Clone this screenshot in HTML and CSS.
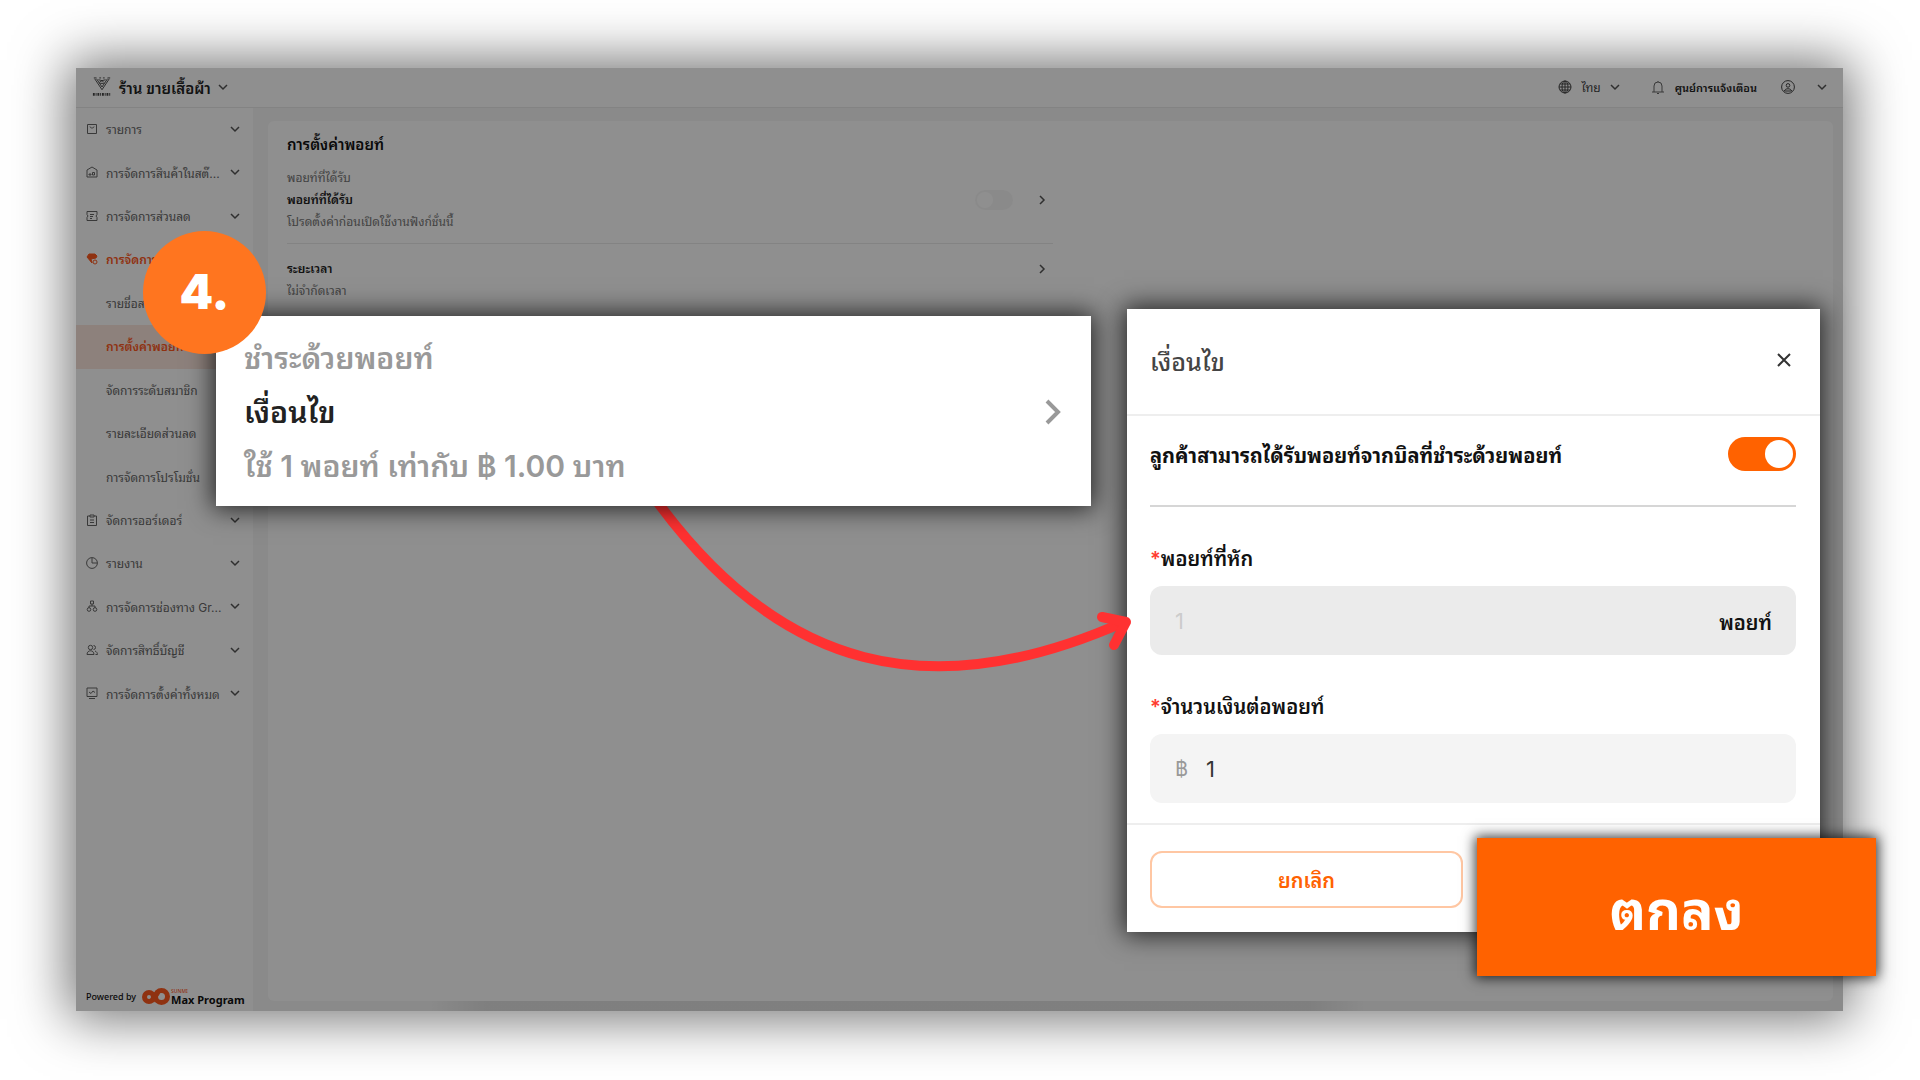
FILE: index.html
```html
<!DOCTYPE html>
<html lang="th">
<head>
    <meta charset="UTF-8">
    <meta name="viewport" content="width=device-width, initial-scale=1.0">
    <title>การตั้งค่าพอยท์</title>
    <link rel="stylesheet" href="styles.css">
</head>
<body>
    <!-- shared icons -->
    <svg class="sprite" aria-hidden="true">
        <symbol id="down" viewBox="0 0 10 10"><path d="M1 3l4 4 4-4"/></symbol>
        <symbol id="right" viewBox="0 0 10 10"><path d="M3 1l4 4-4 4"/></symbol>
    </svg>

    <div class="stage">
        <header class="topbar">
            <button class="shop">
                <svg class="shop-logo" viewBox="0 0 22 24">
                    <path d="M2 2h3M17 2h3M3 3l8 12 8-12M5 3l6 9 6-9M7 4l4 1 4-1M8 7l3-2 2 2M9 8h4M8 2h2M12 2h2"/>
                    <path d="M1 20h20" stroke-width="3" stroke-dasharray="2 1 1 1"/>
                </svg>
                <span>ร้าน ขายเสื้อผ้า</span>
                <svg class="chevron"><use href="#down"/></svg>
            </button>
            <div class="tools">
                <button class="lang">
                    <svg class="tool-icon" viewBox="0 0 14 14"><circle cx="7" cy="7" r="6"/><ellipse cx="7" cy="7" rx="3" ry="6"/><path d="M7 1v12M1 7h12M2 4h10M2 10h10"/></svg>
                    <span>ไทย</span>
                    <svg class="chevron"><use href="#down"/></svg>
                </button>
                <button class="notify">
                    <svg class="tool-icon" viewBox="0 0 14 14"><path d="M1 12h12M3 12V6a4 4 0 0 1 8 0v6M7 1v1M6 13.5h2"/></svg>
                    <span>ศูนย์การแจ้งเตือน</span>
                </button>
                <button class="account" aria-label="บัญชี">
                    <svg class="tool-icon" viewBox="0 0 14 14"><circle cx="7" cy="7" r="6.4"/><circle cx="7" cy="5.4" r="1.8"/><path d="M3.4 11c.6-3 6.6-3 7.2 0z"/></svg>
                    <svg class="chevron"><use href="#down"/></svg>
                </button>
            </div>
        </header>

        <div class="layout">
            <aside class="sidebar">
                <nav class="menu">
                    <a href="#"><svg class="icon" viewBox="0 0 12 12"><path d="M1.5 1.5h9v9h-9zM4 3.5c0 2 4 2 4 0"/></svg><span>รายการ</span><svg class="chevron"><use href="#down"/></svg></a>
                    <a href="#"><svg class="icon" viewBox="0 0 12 12"><path d="M1 4l5-3 5 3v7H1zM3 8h2v1H3zM6.5 6.5h2V9h-2z"/></svg><span>การจัดการสินค้าในสต๊...</span><svg class="chevron"><use href="#down"/></svg></a>
                    <a href="#"><svg class="icon" viewBox="0 0 12 12"><path d="M1 1.5h10v3L10 6l1 1.5v3H1v-3L2 6 1 4.5zM4 4.5h4M4 6.5h3M4 8.5h2"/></svg><span>การจัดการส่วนลด</span><svg class="chevron"><use href="#down"/></svg></a>
                    <a href="#" class="open"><svg class="icon" viewBox="0 0 12 12"><path class="fill" d="M3 1h6l2 2-1 2-5 1 1 4L1 4z"/><circle cx="9" cy="9" r="2"/></svg><span>การจัดการสมาชิก</span></a>
                    <a href="#" class="sub"><span>รายชื่อสมาชิก</span></a>
                    <a href="#" class="sub active"><span>การตั้งค่าพอยท์</span></a>
                    <a href="#" class="sub"><span>จัดการระดับสมาชิก</span></a>
                    <a href="#" class="sub"><span>รายละเอียดส่วนลด</span></a>
                    <a href="#" class="sub"><span>การจัดการโปรโมชั่น</span></a>
                    <a href="#"><svg class="icon" viewBox="0 0 12 12"><path d="M4 2H1.5v9.5h9V2H8M4 1h4v2H4zM4 6h4M4 8.5h4"/></svg><span>จัดการออร์เดอร์</span><svg class="chevron"><use href="#down"/></svg></a>
                    <a href="#"><svg class="icon" viewBox="0 0 12 12"><circle cx="6" cy="6" r="5.4"/><path d="M6 1v5h5"/></svg><span>รายงาน</span><svg class="chevron"><use href="#down"/></svg></a>
                    <a href="#"><svg class="icon" viewBox="0 0 12 12"><path d="M4.5 1h3v3h-3zM6 4v2M3 8V6h6v2"/><circle cx="3" cy="9.5" r="1.8"/><circle cx="9" cy="9.5" r="1.8"/></svg><span>การจัดการช่องทาง Gr...</span><svg class="chevron"><use href="#down"/></svg></a>
                    <a href="#"><svg class="icon" viewBox="0 0 12 12"><circle cx="4.5" cy="3.5" r="2.2"/><path d="M1 10.5c0-5 7-5 7 0zM7.5 1.5a2 2 0 0 1 0 4M9 7c1.500.5 2.500 2 2.500 3.500H9.500"/></svg><span>จัดการสิทธิ์บัญชี</span><svg class="chevron"><use href="#down"/></svg></a>
                    <a href="#"><svg class="icon" viewBox="0 0 12 12"><path d="M1 1h10v8.5H1zM3 11.5h6M3 5l2 1.5L7 4l2 1.5"/></svg><span>การจัดการตั้งค่าทั้งหมด</span><svg class="chevron"><use href="#down"/></svg></a>
                </nav>
                <div class="powered">
                    <span>Powered by</span>
                    <svg class="brand-logo" viewBox="0 0 28 17"><circle cx="7" cy="9" r="4.5"/><circle cx="19.5" cy="8.5" r="6"/><path d="M10 13l6-9"/></svg>
                    <div class="brand"><small>SUNMI</small><b>Max Program</b></div>
                </div>
            </aside>

            <main class="content">
                <section class="panel">
                    <div class="settings">
                        <h1>การตั้งค่าพอยท์</h1>
                        <div class="setting">
                            <div class="setting-text">
                                <p>พอยท์ที่ได้รับ</p>
                                <h2>พอยท์ที่ได้รับ</h2>
                                <p>โปรดตั้งค่าก่อนเปิดใช้งานฟังก์ชั่นนี้</p>
                            </div>
                            <input type="checkbox" class="switch" aria-label="พอยท์ที่ได้รับ">
                            <svg class="chevron"><use href="#right"/></svg>
                        </div>
                        <div class="setting period">
                            <div class="setting-text">
                                <h2>ระยะเวลา</h2>
                                <p>ไม่จำกัดเวลา</p>
                            </div>
                            <svg class="chevron"><use href="#right"/></svg>
                        </div>
                    </div>
                </section>
            </main>
        </div>

        <!-- tutorial layer over the dimmed page -->
        <div class="shade"></div>

        <svg class="arrow" viewBox="0 0 500 200">
            <path d="M16 10C140 180 290 218 484 132"/>
            <path d="M462 127l24 5-12 23"/>
        </svg>

        <section class="callout">
            <div>
                <p>ชำระด้วยพอยท์</p>
                <h2>เงื่อนไข</h2>
                <p>ใช้ 1 พอยท์ เท่ากับ ฿ 1.00 บาท</p>
            </div>
            <svg class="callout-chevron" viewBox="0 0 16 26"><path d="M2 2l11 11L2 24"/></svg>
        </section>

        <div class="step">4.</div>

        <form class="modal">
            <div class="modal-head">
                <h2>เงื่อนไข</h2>
                <button type="button" class="close" aria-label="ปิด"><svg viewBox="0 0 16 16"><path d="M2 2l12 12M14 2L2 14"/></svg></button>
            </div>
            <div class="modal-body">
                <div class="toggle-row">
                    <label for="earn">ลูกค้าสามารถได้รับพอยท์จากบิลที่ชำระด้วยพอยท์</label>
                    <input type="checkbox" id="earn" class="toggle" checked>
                </div>
                <label class="field-label" for="points"><span>*</span>พอยท์ที่หัก</label>
                <div class="field disabled">
                    <input type="text" id="points" value="1" disabled>
                    <b>พอยท์</b>
                </div>
                <label class="field-label" for="amount"><span>*</span>จำนวนเงินต่อพอยท์</label>
                <div class="field">
                    <i>฿</i>
                    <input type="text" id="amount" value="1">
                </div>
            </div>
            <div class="modal-foot">
                <button type="button" class="cancel">ยกเลิก</button>
            </div>
        </form>

        <button class="confirm">ตกลง</button>
    </div>
</body>
</html>
```
FILE: styles.css
```css
* {
    margin: 0;
    padding: 0;
    box-sizing: border-box;
}

body {
    min-height: 100vh;
    padding: 68px 77px 69px 76px;
    background: #fff;
    display: flex;
    font-family: "Inter", "Noto Sans Thai Looped", "Loma", "Noto Sans", sans-serif;
}

button {
    border: none;
    background: none;
    font: inherit;
    color: inherit;
    cursor: pointer;
}

svg {
    fill: none;
    stroke: currentColor;
    flex: none;
}

a {
    color: inherit;
    text-decoration: none;
}

.sprite {
    position: absolute;
    width: 0;
    height: 0;
}

.stage {
    position: relative;
    flex: 1;
    display: flex;
    flex-direction: column;
    background: #fff;
    box-shadow: 0 0 50px 8px rgba(0, 0, 0, 0.55);
}

.shade {
    position: absolute;
    inset: 0;
    background: rgba(0, 0, 0, 0.44);
}

/* faint dark strip at the bottom edge */
.shade::after {
    content: "";
    position: absolute;
    left: 20%;
    right: 27%;
    bottom: 0;
    height: 10px;
    background: linear-gradient(90deg, transparent, rgba(0, 0, 0, 0.08) 6%, rgba(0, 0, 0, 0.08) 94%, transparent);
}

.chevron {
    width: 10px;
    height: 10px;
    stroke-width: 1.5;
    color: #555;
}

/* top bar */
.topbar {
    height: 40px;
    padding: 0 16px 2px;
    display: flex;
    align-items: center;
    justify-content: space-between;
    border-bottom: 1px solid #eaeaea;
}

.shop,
.lang,
.notify,
.account {
    display: flex;
    align-items: center;
}

.shop {
    gap: 7px;
    font-size: 15px;
    font-weight: 600;
    color: #222;
}

.shop-logo {
    width: 20px;
    height: 22px;
    color: #444;
    stroke-width: 1;
}

.tools {
    display: flex;
    align-items: center;
    gap: 24px;
    font-size: 12px;
    color: #444;
}

.tool-icon {
    width: 14px;
    height: 14px;
}

.lang {
    gap: 9px;
}

.notify {
    gap: 10px;
    margin-left: 7px;
    font-size: 11px;
    font-weight: 600;
    color: #222;
}

.notify svg {
    color: #666;
}

.account {
    gap: 22px;
}

/* sidebar */
.layout {
    flex: 1;
    display: flex;
}

.sidebar {
    width: 177px;
    display: flex;
    flex-direction: column;
    justify-content: space-between;
}

.menu {
    height: 608px;
    display: flex;
    flex-direction: column;
    font-size: 12px;
    font-weight: 400;
    color: #666;
}

.menu a {
    flex: 1;
    display: flex;
    align-items: center;
    padding: 0 13px 2px 10px;
}

.menu a span {
    margin-right: auto;
    white-space: nowrap;
}

.icon {
    width: 12px;
    height: 12px;
    margin-right: 8px;
}

.menu .sub {
    padding-left: 30px;
}

.menu .open,
.menu .active {
    color: #ff5a1f;
    font-weight: 600;
}

.menu .active {
    background: #fbe6dd;
}

.fill {
    fill: currentColor;
}

.powered {
    display: flex;
    align-items: center;
    gap: 6px;
    padding: 0 0 6px 10px;
    font-family: "Noto Sans", sans-serif;
    font-size: 9px;
    font-weight: 500;
    color: #111;
}

.brand-logo {
    width: 28px;
    height: 17px;
    margin-right: -5px;
    stroke: #ff5a1f;
    stroke-width: 5;
}

.brand {
    display: flex;
    flex-direction: column;
    line-height: 11px;
    font-size: 11px;
}

.brand small {
    font-size: 5px;
    line-height: 5px;
    color: #ff5a1f;
}

/* content */
.content {
    flex: 1;
    display: flex;
    padding: 13px 10px 10px 15px;
    background: #f6f6f6;
}

.panel {
    flex: 1;
    padding: 12px 19px;
    background: #fff;
    border-radius: 6px;
}

.settings {
    max-width: 766px;
}

.settings h1 {
    font-size: 15px;
    line-height: 24px;
    margin-bottom: 10px;
    font-weight: 600;
    color: #111;
}

.setting {
    display: flex;
    align-items: center;
    gap: 24px;
    padding-right: 6px;
}

.setting-text {
    flex: 1;
    font-size: 12px;
    line-height: 22px;
    color: #777;
}

.setting-text h2 {
    font-size: 12px;
    font-weight: 600;
    color: #222;
}

.period {
    margin-top: 10px;
    padding-top: 14px;
    border-top: 1px solid #eaeaea;
    align-items: flex-start;
}

.period .chevron {
    margin-top: 6px;
}

.switch,
.toggle {
    appearance: none;
    display: flex;
    align-items: center;
}

.switch {
    width: 38px;
    height: 20px;
    padding: 2px;
    border-radius: 10px;
    background: #f7f7f7;
}

.switch::before {
    content: "";
    width: 16px;
    height: 16px;
    border-radius: 50%;
    background: #fff;
}

/* arrow from the callout to the form */
.arrow {
    position: absolute;
    left: 564px;
    top: 422px;
    width: 500px;
    height: 200px;
    z-index: 2;
    stroke: #ff3131;
    stroke-width: 10;
    stroke-linecap: round;
    stroke-linejoin: round;
}

.callout {
    position: absolute;
    left: 140px;
    top: 248px;
    z-index: 3;
    width: 875px;
    padding: 15px 28px 13px;
    display: flex;
    align-items: center;
    justify-content: space-between;
    background: #fff;
    box-shadow: 0 0 24px 3px rgba(0, 0, 0, 0.75);
    font-size: 30px;
    line-height: 54px;
    font-weight: 600;
    color: #999;
}

.callout h2 {
    font-size: 30px;
    font-weight: 600;
    color: #222;
}

.callout-chevron {
    width: 16px;
    height: 26px;
    margin-right: 2px;
    stroke-width: 4;
}

.step {
    position: absolute;
    left: 67px;
    top: 163px;
    z-index: 4;
    width: 123px;
    height: 123px;
    border-radius: 50%;
    background: #ff751f;
    color: #fff;
    font-size: 48px;
    font-weight: 900;
    line-height: 121px;
    text-align: center;
}

/* modal */
.modal {
    position: absolute;
    right: 23px;
    top: 241px;
    z-index: 1;
    width: 693px;
    background: #fff;
    box-shadow: 0 0 24px 3px rgba(0, 0, 0, 0.75);
    font-size: 20px;
    color: #111;
}

.modal-head {
    height: 107px;
    padding: 0 28px 4px 23px;
    display: flex;
    align-items: center;
    justify-content: space-between;
    border-bottom: 2px solid #eee;
}

.modal-head h2 {
    font-size: 25px;
    font-weight: 500;
    color: #444;
}

.close svg {
    display: block;
    width: 16px;
    height: 16px;
    stroke: #333;
    stroke-width: 2;
}

.modal-body {
    padding: 0 24px 20px 23px;
}

.toggle-row {
    height: 91px;
    padding-bottom: 14px;
    display: flex;
    align-items: center;
    justify-content: space-between;
    border-bottom: 2px solid #d6d6d6;
    font-weight: 700;
}

.toggle {
    width: 68px;
    height: 34px;
    padding: 3px;
    justify-content: flex-end;
    border-radius: 17px;
    background: #ff6200;
}

.toggle::before {
    content: "";
    width: 28px;
    height: 28px;
    border-radius: 50%;
    background: #fff;
}

.field-label {
    display: block;
    padding-top: 36px;
    line-height: 32px;
    margin-bottom: 11px;
    font-weight: 600;
}

.field-label span {
    color: #ff3b30;
}

.field {
    height: 69px;
    padding: 0 24px 0 25px;
    display: flex;
    align-items: center;
    gap: 18px;
    border-radius: 12px;
    background: #f4f4f4;
}

.field input {
    flex: 1;
    min-width: 0;
    border: none;
    background: none;
    font: inherit;
    font-size: 22px;
    color: #333;
}

.field i {
    font-style: normal;
    color: #999;
}

.field b {
    font-weight: 600;
}

.field.disabled {
    background: #ebebeb;
}

.field.disabled input {
    color: #ccc;
}

.modal-foot {
    height: 109px;
    padding: 26px 23px;
    border-top: 2px solid #eee;
}

.cancel {
    width: 313px;
    height: 57px;
    padding-bottom: 2px;
    border: 2px solid #ffc7a3;
    border-radius: 12px;
    color: #ff6200;
    font-weight: 600;
}

.confirm {
    position: absolute;
    right: -33px;
    top: 770px;
    z-index: 3;
    width: 399px;
    height: 138px;
    padding-bottom: 4px;
    background: #ff6200;
    box-shadow: 0 0 12px 2px rgba(0, 0, 0, 0.75);
    color: #fff;
    font-size: 54px;
    font-weight: 700;
}
```
